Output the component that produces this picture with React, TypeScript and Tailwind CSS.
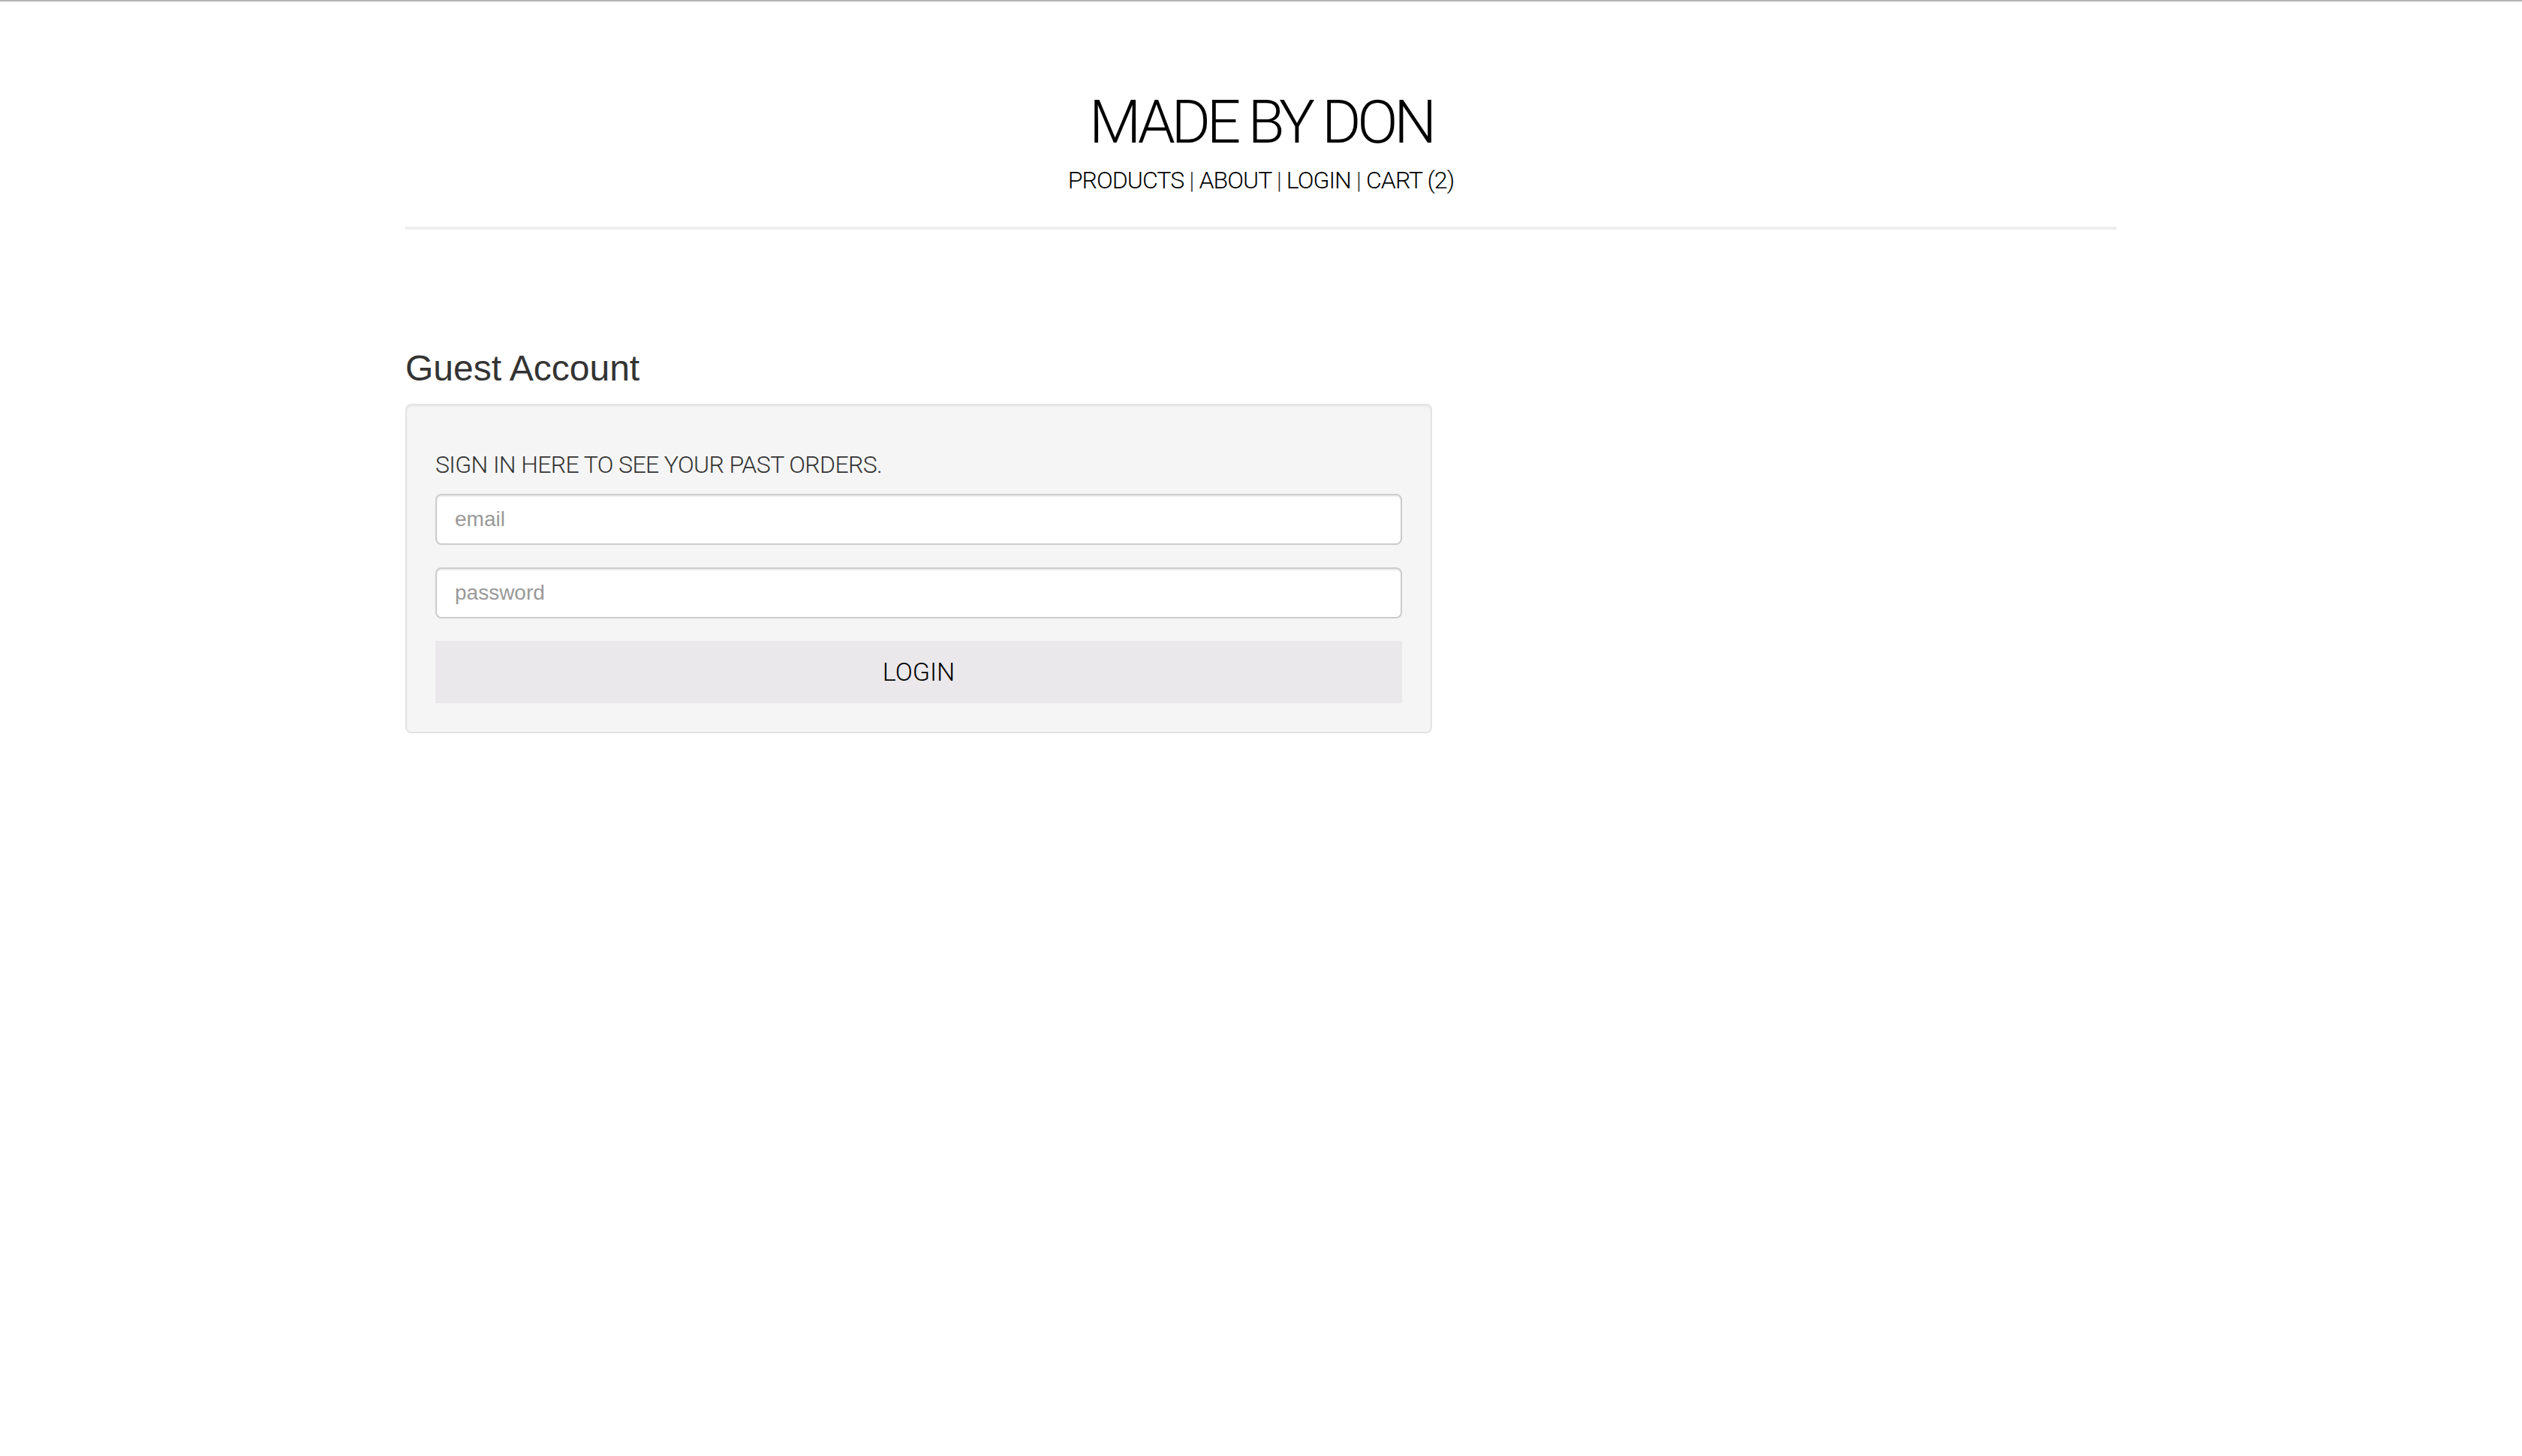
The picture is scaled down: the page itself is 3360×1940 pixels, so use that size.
import React from "react";

const links = ["PRODUCTS", "ABOUT", "LOGIN", "CART (2)"];

export default function App() {
  return (
    <div className="min-h-screen bg-white">
      <div className="h-[2px] bg-[#b4b4b4]" />
      <div className="mx-auto w-[2280px]">
        <header className="flex flex-col items-center pt-[121px]">
          <h1 className="font-['Roboto',sans-serif] text-[80px] leading-[80px] font-light tracking-[-5.2px] text-black">
            MADE BY DON
          </h1>
          <nav className="mt-[21px] font-['Roboto',sans-serif] text-[32px] leading-[32px] font-light tracking-[-0.9px] text-[#111]">
            {links.map((l, i) => (
              <span key={l}>
                {i > 0 && <span className="text-[#333]"> | </span>}
                <a href="#" className="text-black">
                  {l}
                </a>
              </span>
            ))}
          </nav>
        </header>

        <hr className="mt-[46px] border-0 border-t-4 border-[#eeeeee]" />

        <h3 className="mt-[161px] font-['Liberation_Sans',sans-serif] text-[48px] leading-[48px] text-[#333]">
          Guest Account
        </h3>

        <div className="mt-[23px] w-[1368px] rounded-[8px] border-2 border-[#e3e3e3] bg-[#f5f5f5] p-[38px] shadow-[inset_0_2px_2px_rgba(0,0,0,0.05)]">
          <p className="mt-[25px] font-['Roboto',sans-serif] text-[32px] leading-[32px] font-light tracking-[-0.6px] text-[#333]">
            SIGN IN HERE TO SEE YOUR PAST ORDERS.
          </p>
          <form className="mt-[23px] flex flex-col gap-[30px]">
            <input
              type="email"
              placeholder="email"
              className="h-[68px] w-full rounded-[8px] border-2 border-[#cccccc] bg-white px-[24px] font-['Liberation_Sans',sans-serif] text-[28px] text-[#555] shadow-[inset_0_2px_2px_rgba(0,0,0,0.075)] outline-none placeholder:text-[#999]"
            />
            <input
              type="password"
              placeholder="password"
              className="h-[68px] w-full rounded-[8px] border-2 border-[#cccccc] bg-white px-[24px] font-['Liberation_Sans',sans-serif] text-[28px] text-[#555] shadow-[inset_0_2px_2px_rgba(0,0,0,0.075)] outline-none placeholder:text-[#999]"
            />
            <button
              type="button"
              className="h-[83px] w-full bg-[#eae8eb] font-['Roboto',sans-serif] text-[34px] font-light text-black"
            >
              LOGIN
            </button>
          </form>
        </div>
      </div>
    </div>
  );
}
